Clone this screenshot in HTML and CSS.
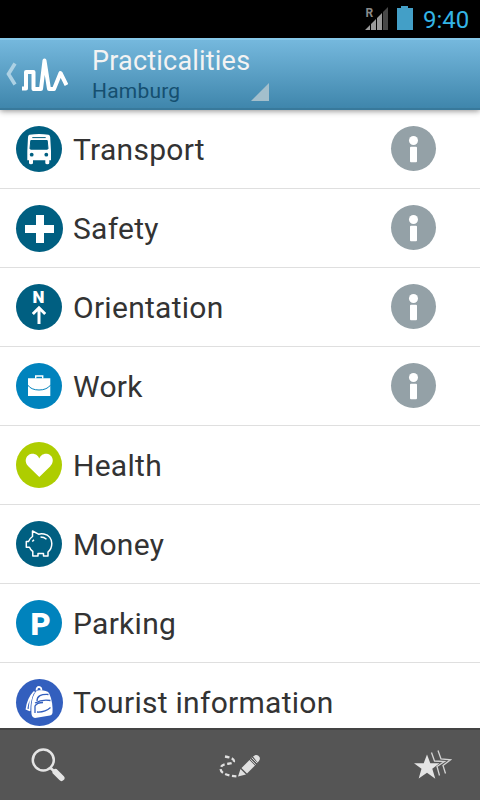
FILE: index.html
```html
<!DOCTYPE html>
<html lang="en">
<head>
    <meta charset="UTF-8">
    <meta name="viewport" content="width=device-width, initial-scale=1.0">
    <title>Practicalities</title>
    <link rel="stylesheet" href="styles.css">
</head>
<body>
    <div class="status-bar">
        <svg class="signal" width="24" height="24" viewBox="0 0 24 24">
            <text x="0.500" y="10" class="roaming">R</text>
            <path d="M0 23L5 18V23Z M6 17L11 12V23H6Z M12 11L17 6V23H12Z" fill="#9a9a9a"/>
            <path d="M18 5L23 0V23H18Z" fill="#484848"/>
        </svg>
        <svg class="battery" width="16" height="24" viewBox="0 0 16 24">
            <path d="M0 2H4V0H11V2H16V24H0Z" fill="#439fc7"/>
        </svg>
        <span class="clock">9:40</span>
    </div>
    <div class="header">
        <svg class="logo" width="68" height="72" viewBox="0 0 68 72">
            <path d="M15 25.500L8.500 36L15 46.500" fill="none" stroke="#add1e4" stroke-width="3.600"/>
            <path d="M22 50.500H26V34H33.500V51H41L44.500 22.500L49 51H54L60.500 35L66.500 47" fill="none" stroke="#fff" stroke-width="4" stroke-linejoin="round"/>
        </svg>
        <div class="titles">
            <div class="title">Practicalities</div>
            <div class="subtitle">Hamburg</div>
        </div>
        <div class="spinner"></div>
    </div>
    <ul class="list">
        <li class="row">
            <svg class="icon petrol" viewBox="0 0 46 46">
                <path d="M13.500 8.800Q23 7.200 32.500 8.800Q34 9.200 34.200 11L35 25V34.300H33.300V37Q33.300 38.300 31.300 38.300Q29.300 38.300 29.300 37V34.300H17V37Q17 38.300 15 38.300Q13 38.300 13 37V34.300H11.300V25L12 11Q12.200 9.200 13.500 8.800Z" fill="#fff"/>
                <path d="M16.300 11.600H29.700M14.800 14.500H31.200L32 22.500Q32 23.200 31 23.200H15Q14 23.200 14 22.500Z" fill="#005f81" stroke="#005f81"/>
                <circle cx="15.700" cy="28.700" r="1.900" fill="#005f81"/>
                <circle cx="30.300" cy="28.700" r="1.900" fill="#005f81"/>
            </svg>
            <span class="label">Transport</span>
            <svg class="info" viewBox="0 0 45 45"><circle cx="22.500" cy="14.500" r="4.500"/><rect x="19" y="20.700" width="7" height="15.500" rx="1"/></svg>
        </li>
        <li class="row">
            <svg class="icon big petrol" viewBox="0 0 47 47">
                <path d="M20 10H28V20H38V28H28V38H20V28H9V20H20Z" fill="#fff"/>
            </svg>
            <span class="label">Safety</span>
            <svg class="info" viewBox="0 0 45 45"><circle cx="22.500" cy="14.500" r="4.500"/><rect x="19" y="20.700" width="7" height="15.500" rx="1"/></svg>
        </li>
        <li class="row">
            <svg class="icon petrol" viewBox="0 0 46 46">
                <text x="22.500" y="19" class="north">N</text>
                <path d="M23 40V24M16.800 30L23 23.800L29.200 30" fill="none" stroke="#fff" stroke-width="3"/>
            </svg>
            <span class="label">Orientation</span>
            <svg class="info" viewBox="0 0 45 45"><circle cx="22.500" cy="14.500" r="4.500"/><rect x="19" y="20.700" width="7" height="15.500" rx="1"/></svg>
        </li>
        <li class="row">
            <svg class="icon blue" viewBox="0 0 46 46">
                <path d="M12 15.300H34.300V33H12Z" fill="#fff"/>
                <path d="M19.700 15.500V13H26.700V15.500" fill="none" stroke="#fff" stroke-width="1.400"/>
                <path d="M11.500 21.800Q15 27 23 27Q31 27 34.800 21.800" fill="none" stroke="#0083bd"/>
            </svg>
            <span class="label">Work</span>
            <svg class="info" viewBox="0 0 45 45"><circle cx="22.500" cy="14.500" r="4.500"/><rect x="19" y="20.700" width="7" height="15.500" rx="1"/></svg>
        </li>
        <li class="row">
            <svg class="icon green" viewBox="0 0 46 46">
                <path d="M23.300 35L12.500 24.500C6.500 18 11.500 11.700 16.500 11.700C20 11.700 22.500 14 23.300 16.500C24.100 14 26.600 11.700 30.100 11.700C35.100 11.700 40.100 18 34.100 24.500Z" fill="#fff"/>
            </svg>
            <span class="label">Health</span>
        </li>
        <li class="row">
            <svg class="icon petrol" viewBox="0 0 46 46">
                <g fill="none" stroke="#fff" stroke-width="1.500" stroke-linejoin="round">
                    <path d="M16.500 10L22.500 13.200Q25 12.500 28 13C33 14 35.800 18 35.800 22.500C35.800 26 34.500 29 32 31V35H27.500V32.500H22V35H16.800V30.500Q14.500 29 13.500 26.300H10.300V20.500H12.500Q13.500 17.500 16.500 15.500Z"/>
                    <path d="M24.500 16Q28 16 30.500 18.200"/>
                    <path d="M16.300 20.500L18 18.800"/>
                </g>
            </svg>
            <span class="label">Money</span>
        </li>
        <li class="row">
            <svg class="icon blue" viewBox="0 0 46 46">
                <text x="24.600" y="34.500" class="park">P</text>
            </svg>
            <span class="label">Parking</span>
        </li>
        <li class="row">
            <svg class="icon big indigo" viewBox="0 0 47 47">
                <path d="M20 12.500C22 10.500 31 11 33 14C36 20 37 28 36.500 34Q36 36 34 36.500L19 39Q16 38.500 15.500 35C15 27 15.500 18 20 12.500Z" fill="#fff"/>
                <path d="M20.500 11.500Q20.500 7.800 23 7.800Q25.500 8 25.500 11.500M18.500 12.500Q12 19 10.500 30L14 31.500M17 14Q13.500 22 13.500 32" fill="none" stroke="#fff" stroke-width="1.700"/>
                <path d="M21 22C21 17 25 15 32.500 15.500M19 24Q26 20 34.500 21.500M19 34V27Q21 23.500 27 23.500M21 33Q29 33.500 34.500 28.500" fill="none" stroke="#335fbe" stroke-width="1.300"/>
            </svg>
            <span class="label">Tourist information</span>
        </li>
    </ul>
    <div class="toolbar">
        <svg width="36" height="36" viewBox="0 0 36 36">
            <circle cx="13.300" cy="13" r="10.500" fill="none" stroke="#e4e4e4" stroke-width="2.500"/>
            <path d="M20.500 21L25 25" stroke="#e4e4e4" stroke-width="2.600"/>
            <path d="M25.500 25L31.500 31" stroke="#e4e4e4" stroke-width="6" stroke-linecap="round"/>
        </svg>
        <svg width="42" height="36" viewBox="0 0 42 36">
            <path d="M6 9.500Q15 11 15 14C14 19 2 14 1.500 22C2 27 10 29 19 29.500" fill="none" stroke="#e0e0e0" stroke-width="2.300" stroke-dasharray="4.500 2.500"/>
            <path d="M19 29.500L21.500 22L27 27.500ZM22.500 21L30.500 13L36 18.500L28 26.500ZM34 9.500L36.500 8Q39 7.500 40.500 10Q41.500 12 40 14L38.500 15.500Z" fill="#e0e0e0"/>
            <path d="M31.200 12L36.800 17.600M32.700 10.600L38.200 16.100" stroke="#e0e0e0" stroke-width="1"/>
        </svg>
        <svg width="38" height="36" viewBox="0 0 38 36">
            <path d="M13 7.500L16.300 16.300H25.500L18.300 21.700L21.300 31.800L13 25.800L4.700 31.500L7.500 21.700L0 16.300H9.700Z" fill="#e4e4e4"/>
            <path d="M17.500 5.500L20.500 14L30.500 14.500L23 19.500L25.500 28.500M24 3.500L27 12L36.500 12.800L29 18.500L31.500 26.500" fill="none" stroke="#d4d4d4" stroke-width="1.300"/>
        </svg>
    </div>
</body>
</html>
```
FILE: styles.css
```css
* {
    box-sizing: border-box;
}
body {
    margin: 0;
    width: 480px;
    height: 800px;
    overflow: hidden;
    display: flex;
    flex-direction: column;
    background: #fff;
    font-family: Roboto, sans-serif;
}
svg {
    display: block;
    flex: none;
}
.status-bar {
    height: 38px;
    flex: none;
    display: flex;
    justify-content: flex-end;
    background: #000;
    padding-right: 9px;
}
.signal {
    margin-top: 7px;
    margin-right: 8px;
}
.roaming {
    font-size: 12px;
    font-weight: bold;
    fill: #8a8a8a;
}
.battery {
    margin-top: 6px;
    margin-right: 10px;
}
.clock {
    font-size: 24px;
    line-height: 40px;
    width: 48px;
    white-space: nowrap;
    color: #33b5e5;
}
.header {
    height: 72px;
    flex: none;
    display: flex;
    background: linear-gradient(#75b8dd, #3f86ac);
    border-top: 2px solid #86c8e9;
    border-bottom: 2px solid #38799b;
    box-shadow: 0 1px 6px rgba(0, 0, 0, 0.45);
    z-index: 1;
}
.logo {
    margin-top: -2px;
}
.titles {
    margin-left: 24px;
    width: 157px;
    padding-top: 5px;
    white-space: nowrap;
}
.title {
    font-size: 27px;
    line-height: 32px;
    color: #f3f3f3;
    letter-spacing: 0.2px;
}
.subtitle {
    font-size: 21px;
    line-height: 28px;
    color: #154f70;
    letter-spacing: 0.2px;
}
.spinner {
    width: 18px;
    height: 18px;
    margin-left: 2px;
    margin-top: 43px;
    background: #a3bfcc;
    clip-path: polygon(100% 0, 100% 100%, 0 100%);
}
.list {
    list-style: none;
    margin: 0;
    padding: 0;
    flex: 1;
    min-height: 0;
    overflow: hidden;
}
.row {
    height: 79px;
    display: flex;
    align-items: center;
    border-bottom: 1px solid #dfdfdf;
    padding-left: 16px;
    padding-right: 44px;
}
.icon {
    width: 46px;
    height: 46px;
    margin-right: 11px;
    border-radius: 50%;
}
.big {
    width: 47px;
    height: 47px;
    margin-right: 10px;
}
.petrol {
    background: #005f81;
}
.blue {
    background: #0083bd;
}
.green {
    background: #aecd00;
}
.indigo {
    background: #335fbe;
}
.north {
    font-size: 17px;
    font-weight: 900;
    text-anchor: middle;
    fill: #fff;
}
.park {
    font-size: 31px;
    font-weight: 900;
    text-anchor: middle;
    fill: #fff;
}
.label {
    flex: 1;
    font-size: 30px;
    line-height: 40px;
    padding-top: 2px;
    color: #333;
    letter-spacing: 0.28px;
    white-space: nowrap;
}
.info {
    width: 45px;
    height: 45px;
    margin-bottom: 1px;
    border-radius: 50%;
    background: #94a1a7;
    fill: #fff;
}
.toolbar {
    height: 72px;
    flex: none;
    display: flex;
    align-items: center;
    justify-content: space-between;
    background: #555;
    border-top: 2px solid #444;
    padding: 0 28px 0 30px;
}
```
